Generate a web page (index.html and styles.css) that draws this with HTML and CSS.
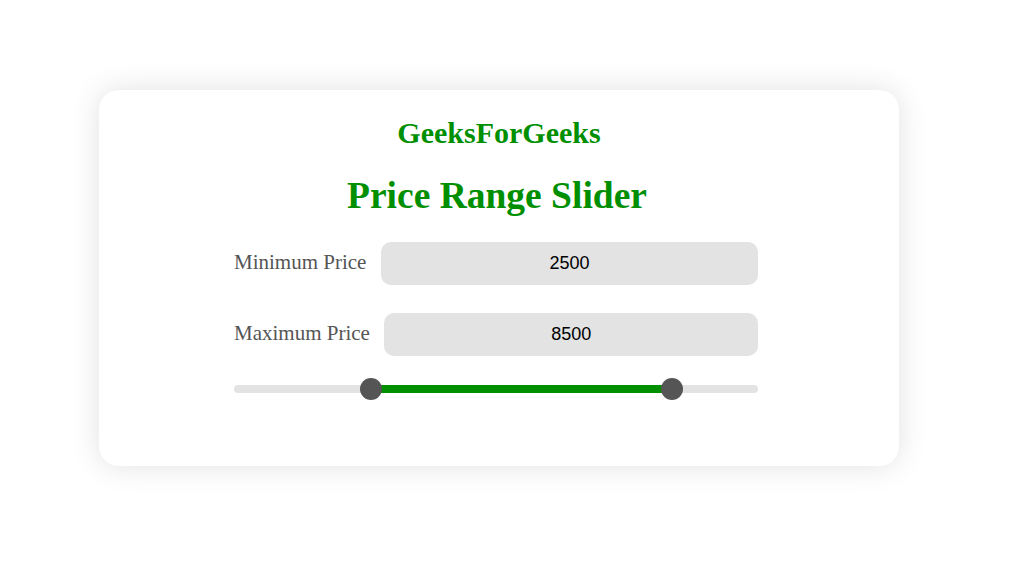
FILE: index.html
```html
<!DOCTYPE html>
<html>
<head>
<meta charset="utf-8">
<link rel="stylesheet" href="styles.css">
</head>
<body>
<div class="card">
  <h2 class="brand">GeeksForGeeks</h2>
  <h1 class="title">Price Range Slider</h1>
  <div class="form">
    <div class="row">
      <label class="label">Minimum Price</label>
      <input class="field" type="text" value="2500">
    </div>
    <div class="row">
      <label class="label">Maximum Price</label>
      <input class="field field-max" type="text" value="8500">
    </div>
    <div class="slider">
      <div class="track">
        <div class="fill" style="left: 25%; right: 15%;"></div>
      </div>
      <div class="thumbs">
        <div class="thumb" style="left: 25%;"></div>
        <div class="thumb" style="left: 85%;"></div>
      </div>
    </div>
  </div>
</div>
</body>
</html>
```

FILE: styles.css
```css
html, body {
  margin: 0;
  padding: 0;
  background: #ffffff;
}
body {
  min-height: 566px;
  box-sizing: border-box;
  padding: 90px 0 0 99px;
  font-family: "Liberation Serif", "Times New Roman", serif;
}
.card {
  width: 800px;
  height: 376px;
  box-sizing: border-box;
  background: #ffffff;
  border-radius: 20px;
  box-shadow: 0 0 30px rgba(0, 0, 0, 0.12);
  padding-top: 26px;
}
.brand {
  margin: 0;
  text-align: center;
  font-size: 30px;
  font-weight: bold;
  color: #008f00;
  line-height: 34px;
}
.title {
  margin: 25px 0 0;
  text-align: center;
  font-size: 37.5px;
  font-weight: bold;
  color: #008f00;
  line-height: 42px;
  padding-right: 4px;
}
.form {
  width: 524px;
  margin: 25px 0 0 135px;
  display: flex;
  flex-direction: column;
  gap: 28.5px;
}
.row {
  display: flex;
  align-items: center;
  gap: 14.5px;
  height: 42.5px;
}
.label {
  font-size: 21px;
  color: #555555;
  white-space: nowrap;
  position: relative;
  top: -1px;
}
.field {
  flex: 1;
  min-width: 0;
  height: 42.5px;
  box-sizing: border-box;
  border: none;
  outline: none;
  border-radius: 10px;
  background: #e3e3e3;
  font-family: "Liberation Sans", Arial, sans-serif;
  font-size: 18px;
  color: #000000;
  text-align: center;
  padding: 0 10px;
  margin: 0;
}
.field-max {
  height: 43px;
}
.slider {
  position: relative;
  height: 22px;
  margin-top: -6.5px;
}
.track {
  position: absolute;
  left: 0;
  right: 0;
  top: 7px;
  height: 8px;
  border-radius: 4px;
  background: #e3e3e3;
}
.fill {
  position: absolute;
  top: 0;
  bottom: 0;
  background: #008f00;
}
.thumbs {
  position: absolute;
  left: 11px;
  right: 11px;
  top: 0;
  bottom: 0;
}
.thumb {
  position: absolute;
  top: 0;
  width: 22px;
  height: 22px;
  margin-left: -11px;
  border-radius: 50%;
  background: #555555;
}
```
